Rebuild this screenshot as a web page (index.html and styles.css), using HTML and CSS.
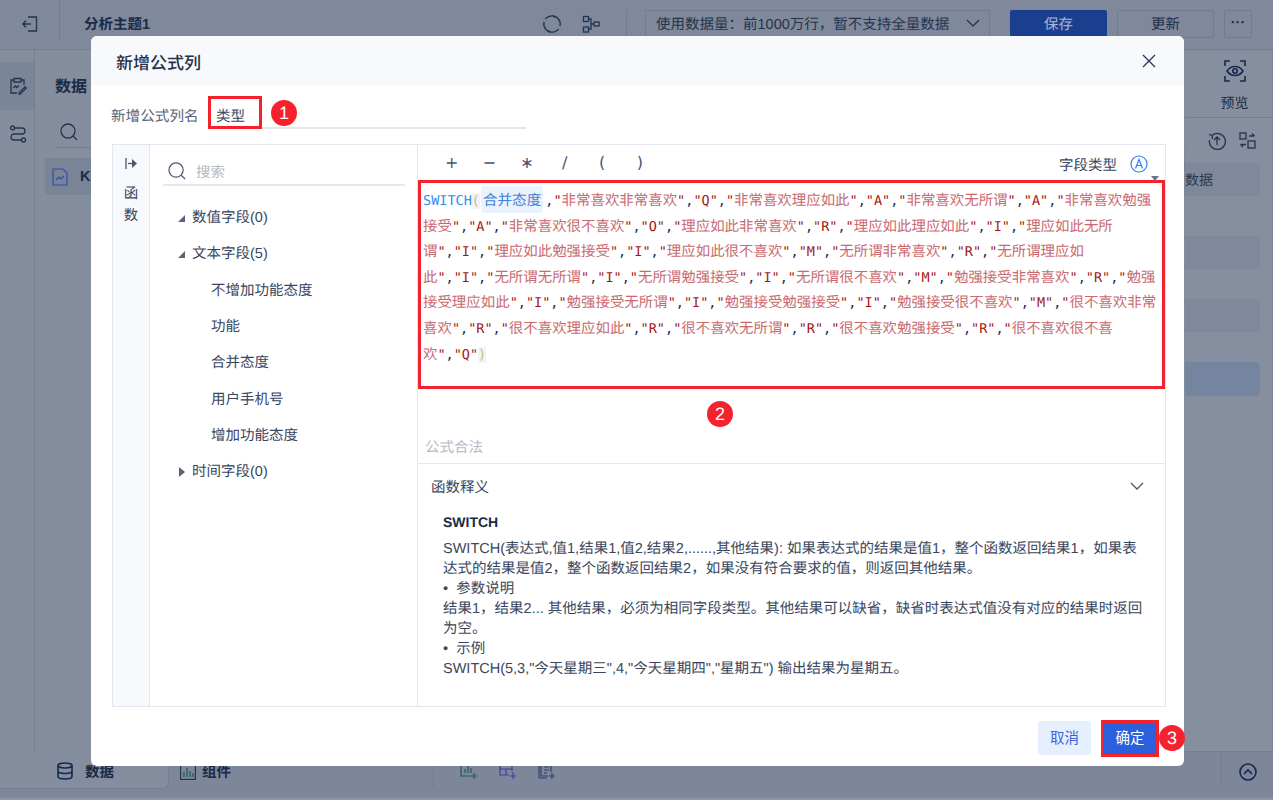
FILE: index.html
```html
<!DOCTYPE html>
<html lang="zh">
<head>
<meta charset="utf-8">
<title>新增公式列</title>
<link rel="stylesheet" href="styles.css">
</head>
<body>
<div class="app">
  <header class="topbar">
    <div class="exit">
      <svg width="18" height="18" viewBox="0 0 18 18" class="ic"><path d="M7 2h8.500v14H7M10 9H2M5 5.500 1.800 9 5 12.500"/></svg>
    </div>
    <div class="theme">分析主题1</div>
    <div class="tools">
      <svg width="20" height="20" viewBox="0 0 20 20" class="ic"><path d="M5 3.500A8 8 0 0 1 15 16.500M15 16.500A8 8 0 0 1 5 3.500" stroke-dasharray="20 3"/><path d="M11 1.500 13 3.500M8 18.500 6.500 16.500"/></svg>
      <svg width="18" height="18" viewBox="0 0 18 18" class="ic"><rect x="1.500" y="1.500" width="5" height="5"/><rect x="1.500" y="12" width="5" height="5"/><rect x="12" y="7" width="5" height="4"/><path d="M6.500 4H9v10H6.500M9 9h3"/></svg>
    </div>
    <div class="select"><span>使用数据量：前1000万行，暂不支持全量数据</span>
      <svg width="14" height="9" viewBox="0 0 14 9" class="ic"><path d="M1 1l6 6 6-6"/></svg>
    </div>
    <div class="btn save">保存</div>
    <div class="btn plain">更新</div>
    <div class="btn more">···</div>
  </header>
  <div class="body">
    <aside class="rail">
      <div class="rail-item active">
        <svg width="18" height="18" viewBox="0 0 18 18" class="ic"><path d="M12 3h3v5M5 3H2v13h6M5 1.500h7V5H5zM4.500 11l2-2 1.500 1.500 2-2M10 16l6-6 1.200 1.200-6 6H10z"/></svg>
      </div>
      <div class="rail-item">
        <svg width="18" height="18" viewBox="0 0 18 18" class="ic"><circle cx="3.500" cy="3" r="2"/><circle cx="14.500" cy="15" r="2"/><path d="M5.500 3H13a3 3 0 0 1 0 6H5a3 3 0 0 0 0 6h7.500"/></svg>
      </div>
    </aside>
    <section class="panel">
      <h2 class="panel-title">数据</h2>
      <div class="panel-search">
        <svg width="18" height="18" viewBox="0 0 18 18" class="ic"><circle cx="8" cy="8" r="7"/><path d="M13 13l4 4"/></svg>
      </div>
      <div class="panel-row">
        <svg width="16" height="18" viewBox="0 0 16 18" class="ic-blue"><path d="M1 1h10l4 4v12H1zM4 12l3-3 2 2 3-3"/></svg>
        <b>KA</b>
      </div>
    </section>
    <aside class="side">
      <div class="preview">
        <svg width="22" height="22" viewBox="0 0 22 22" class="ic-dark"><path d="M1 6V1h5M16 1h5v5M21 16v5h-5M6 21H1v-5M3 11c4-6 12-6 16 0-4 6-12 6-16 0z"/><circle cx="11" cy="11" r="2.200"/></svg>
        <span>预览</span>
      </div>
      <div class="side-tools">
        <svg width="18" height="18" viewBox="0 0 18 18" class="ic"><path d="M4 3.500A8 8 0 1 1 1.500 8M1 2.500 4 3.500 4.500 7M9 13V5M6 8l3-3 3 3"/></svg>
        <svg width="17" height="17" viewBox="0 0 17 17" class="ic"><rect x="1" y="1" width="6" height="6"/><rect x="9" y="9" width="7" height="7"/><path d="M10 4h5M13 1.500 15.500 4M7 12.500H1.500M4 15l-2.500-2.500"/></svg>
      </div>
      <div class="card">数据</div>
      <div class="card gap-1"></div>
      <div class="card gap-2"></div>
      <div class="card gap-2 blue"></div>
    </aside>
  </div>
  <footer class="bottombar">
    <div class="tab active">
      <svg width="16" height="18" viewBox="0 0 16 18" class="ic-dark"><ellipse cx="8" cy="3.500" rx="7" ry="2.500"/><path d="M1 3.500v11c0 3.300 14 3.300 14 0v-11M1 9c0 3.300 14 3.300 14 0"/></svg>
      <span>数据</span>
    </div>
    <div class="tab">
      <svg width="16" height="16" viewBox="0 0 16 16" class="ic"><rect x=".5" y=".5" width="15" height="15"/><path d="M4 13V8M7 13V4M10 13V7M13 13V9" class="teal"/></svg>
      <span>组件</span>
    </div>
    <div class="bar-tools">
      <svg width="18" height="18" viewBox="0 0 18 18" class="ic-teal"><path d="M1 1v13h10M5 11V7M8 11V3M11 11V6M14 11v6M11 14h6"/></svg>
      <svg width="18" height="18" viewBox="0 0 18 18" class="ic-purple"><path d="M1 2h12v7M1 2v11h9M1 7h12M7 7v6M14 10v7M11 14h6"/></svg>
      <svg width="18" height="18" viewBox="0 0 18 18" class="ic-navy"><path d="M3 1h10v9M3 1v13h7M1 3v13h8M6 5h5M6 8h5M6 11h3M14 11v6M11 14h6"/></svg>
    </div>
    <div class="collapse">
      <svg width="18" height="18" viewBox="0 0 18 18" class="ic-dark"><circle cx="9" cy="9" r="8"/><path d="M5 11l4-4 4 4"/></svg>
    </div>
  </footer>
</div>

<div class="modal">
  <div class="modal-head">
    <span class="modal-title">新增公式列</span>
    <svg width="14" height="14" viewBox="0 0 14 14" class="close"><path d="M1 1l12 12M13 1 1 13"/></svg>
  </div>
  <div class="name-row">
    <label class="name-label">新增公式列名</label>
    <div class="name-input"><span class="name-box">类型</span></div>
    <span class="badge b1">1</span>
  </div>
  <div class="workspace">
    <div class="ws-rail">
      <svg width="13" height="11" viewBox="0 0 13 11" class="rail-arrow"><path d="M1 0v11" class="line"/><path d="M3 5.500h4" class="line"/><path d="M7 1l5 4.500L7 10z" class="tri"/></svg>
      <span>函</span>
      <span>数</span>
    </div>
    <div class="ws-tree">
      <div class="tree-search">
        <svg width="18" height="18" viewBox="0 0 19 19" class="s-ic"><circle cx="8.500" cy="8.500" r="7.500"/><path d="M14 14l4 4"/></svg>
        <span>搜索</span>
      </div>
      <ul class="tree">
        <li class="group"><span class="tri-down"></span>数值字段(0)</li>
        <li class="group"><span class="tri-down"></span>文本字段(5)</li>
        <li class="leaf">不增加功能态度</li>
        <li class="leaf">功能</li>
        <li class="leaf">合并态度</li>
        <li class="leaf">用户手机号</li>
        <li class="leaf">增加功能态度</li>
        <li class="group"><span class="tri-right"></span>时间字段(0)</li>
      </ul>
    </div>
    <div class="ws-main">
      <div class="toolbar">
        <div class="ops"><span>+</span><span>−</span><span>∗</span><span>/</span><span>(</span><span>)</span></div>
        <div class="field-type">字段类型
          <svg width="18" height="18" viewBox="0 0 18 18" class="type-ic"><circle cx="9" cy="9" r="8"/><path d="M5.500 13.500 9 4.500l3.500 9M6.500 10.500h5"/></svg>
          <span class="mini-tri"></span>
        </div>
      </div>
      <div class="editor"><span class="kw">SWITCH</span><span class="paren">(</span><span class="chip">合并态度</span><span class="c">,</span>"<span class="z">非常喜欢非常喜欢</span>"<span class="c">,</span>"Q"<span class="c">,</span>"<span class="z">非常喜欢理应如此</span>"<span class="c">,</span>"A"<span class="c">,</span>"<span class="z">非常喜欢无所谓</span>"<span class="c">,</span>"A"<span class="c">,</span>"<span class="z">非常喜欢勉强接受</span>"<span class="c">,</span>"A"<span class="c">,</span>"<span class="z">非常喜欢很不喜欢</span>"<span class="c">,</span>"O"<span class="c">,</span>"<span class="z">理应如此非常喜欢</span>"<span class="c">,</span>"R"<span class="c">,</span>"<span class="z">理应如此理应如此</span>"<span class="c">,</span>"I"<span class="c">,</span>"<span class="z">理应如此无所谓</span>"<span class="c">,</span>"I"<span class="c">,</span>"<span class="z">理应如此勉强接受</span>"<span class="c">,</span>"I"<span class="c">,</span>"<span class="z">理应如此很不喜欢</span>"<span class="c">,</span>"M"<span class="c">,</span>"<span class="z">无所谓非常喜欢</span>"<span class="c">,</span>"R"<span class="c">,</span>"<span class="z">无所谓理应如此</span>"<span class="c">,</span>"I"<span class="c">,</span>"<span class="z">无所谓无所谓</span>"<span class="c">,</span>"I"<span class="c">,</span>"<span class="z">无所谓勉强接受</span>"<span class="c">,</span>"I"<span class="c">,</span>"<span class="z">无所谓很不喜欢</span>"<span class="c">,</span>"M"<span class="c">,</span>"<span class="z">勉强接受非常喜欢</span>"<span class="c">,</span>"R"<span class="c">,</span>"<span class="z">勉强接受理应如此</span>"<span class="c">,</span>"I"<span class="c">,</span>"<span class="z">勉强接受无所谓</span>"<span class="c">,</span>"I"<span class="c">,</span>"<span class="z">勉强接受勉强接受</span>"<span class="c">,</span>"I"<span class="c">,</span>"<span class="z">勉强接受很不喜欢</span>"<span class="c">,</span>"M"<span class="c">,</span>"<span class="z">很不喜欢非常喜欢</span>"<span class="c">,</span>"R"<span class="c">,</span>"<span class="z">很不喜欢理应如此</span>"<span class="c">,</span>"R"<span class="c">,</span>"<span class="z">很不喜欢无所谓</span>"<span class="c">,</span>"R"<span class="c">,</span>"<span class="z">很不喜欢勉强接受</span>"<span class="c">,</span>"R"<span class="c">,</span>"<span class="z">很不喜欢很不喜欢</span>"<span class="c">,</span>"Q"<span class="paren">)</span></div>
      <div class="status"><span class="status-text">公式合法</span><span class="badge b2">2</span></div>
      <div class="help">
        <div class="help-head"><span>函数释义</span>
          <svg width="14" height="9" viewBox="0 0 14 9" class="chev"><path d="M1 1l6 6 6-6"/></svg>
        </div>
        <div class="help-body">
          <div class="help-name">SWITCH</div>
          <p>SWITCH(表达式,值1,结果1,值2,结果2,......,其他结果): 如果表达式的结果是值1，整个函数返回结果1，如果表达式的结果是值2，整个函数返回结果2，如果没有符合要求的值，则返回其他结果。</p>
          <p>•&nbsp; 参数说明</p>
          <p>结果1，结果2... 其他结果，必须为相同字段类型。其他结果可以缺省，缺省时表达式值没有对应的结果时返回为空。</p>
          <p>•&nbsp; 示例</p>
          <p>SWITCH(5,3,"今天星期三",4,"今天星期四","星期五") 输出结果为星期五。</p>
        </div>
      </div>
    </div>
  </div>
  <div class="modal-foot">
    <button class="m-btn cancel">取消</button>
    <button class="m-btn ok">确定</button>
    <span class="badge b3">3</span>
  </div>
</div>
</body>
</html>
```
FILE: styles.css
```css
* { box-sizing: border-box; }
html, body { margin: 0; padding: 0; height: 800px; overflow: hidden; }
body { font-family: "Liberation Sans", "Noto Sans CJK SC", sans-serif; font-size: 14.5px; color: #1c2a45; background: #7f899b; text-rendering: geometricPrecision; }
ul { list-style: none; margin: 0; padding: 0; }
svg { display: block; flex: none; fill: none; }
.ic path, .ic rect, .ic circle { stroke: #24344f; stroke-width: 1.3; }
.ic-dark path, .ic-dark circle, .ic-dark ellipse { stroke: #14294f; stroke-width: 1.6; }
.ic-blue path { stroke: #2c4fa8; stroke-width: 1.2; }
.ic-teal path { stroke: #1f5a66; stroke-width: 1.2; }
.ic-purple path { stroke: #3f3f99; stroke-width: 1.2; }
.ic-navy path { stroke: #33406f; stroke-width: 1.2; }

.app { height: 800px; display: flex; flex-direction: column; }
.topbar { height: 50px; flex: none; display: flex; align-items: flex-start; padding-top: 10px; background: #7f899b; border-bottom: 1px solid #767f91; }
.exit { width: 60px; height: 39px; margin-top: -10px; padding: 15px 0 0 21px; border-right: 1px solid #727c8e; }
.theme { margin: 5px 0 0 24px; width: 458px; font-weight: bold; line-height: 21px; color: #1a2a44; }
.tools { width: 85px; height: 28px; display: flex; align-items: center; gap: 20px; border-right: 1px solid #727c8e; }
.select { margin-left: 18px; width: 345px; height: 28px; padding: 0 9px 2px 10px; display: flex; align-items: center; justify-content: space-between; border: 1px solid #727c8e; color: #25344d; }
.btn { height: 28px; padding-bottom: 2px; display: flex; align-items: center; justify-content: center; border-radius: 2px; }
.save { margin-left: 20px; width: 97px; background: #1b3f8f; color: #a9b6cf; }
.plain { margin-left: 10px; width: 97px; border: 1px solid #727c8e; color: #1f2e48; }
.more { margin-left: 10px; width: 28px; border: 1px solid #727c8e; color: #1f2e48; font-weight: bold; }

.body { flex: 1; display: flex; min-height: 0; }
.rail { width: 35px; flex: none; padding-top: 12px; background: #858e9f; border-right: 1px solid #757f90; }
.rail-item { height: 48px; padding: 15px 0 0 9px; }
.rail-item.active { background: #7b8598; }
.panel { flex: 1; background: #858e9f; padding: 26px 0 0 10px; }
.panel-title { margin: 0 0 0 10px; font-size: 16px; line-height: 24px; color: #1c2a45; }
.panel-search { margin: 21px 0 0 10px; height: 27px; padding: 2px 0 0 5px; border-bottom: 1px solid #727c8e; }
.panel-row { margin-top: 10px; height: 37px; display: flex; align-items: center; gap: 12px; padding-left: 7px; background: #7a8497; }
.side { width: 88px; flex: none; background: #868f9f; border-right: 1px solid #7b8495; border-bottom: 1px solid #767f91; padding-right: 12px; }
.preview { height: 68px; margin-right: -12px; padding: 10px 0 0 12px; border-bottom: 1px solid #757f90; display: flex; flex-direction: column; align-items: center; }
.preview span { margin-top: 11px; color: #1c2a45; font-size: 14px; line-height: 20px; }
.side-tools { height: 45px; display: flex; align-items: center; justify-content: flex-end; gap: 13px; padding-right: 4px; }
.card { height: 33px; background: #7f899b; border-radius: 0 5px 5px 0; color: #2a3850; font-size: 14px; line-height: 35px; }
.gap-1 { margin-top: 40px; }
.gap-2 { margin-top: 30px; }
.blue { height: 34px; background: #76859f; }

.bottombar { height: 48px; flex: none; display: flex; align-items: flex-start; background: #7d8799; border-bottom: 2px solid #8f97a6; }
.tab { display: flex; align-items: center; height: 37px; font-weight: bold; color: #1c2a45; }
.tab.active { width: 169px; gap: 12px; padding: 2px 0 0 57px; background: #858e9f; border-radius: 0 0 6px 0; border: 1px solid #757f90; border-width: 0 1px 1px 0; }
.tab:not(.active) { gap: 6px; padding: 2px 0 0 11px; width: 264px; }
.teal { stroke: #1f5a66 !important; }
.bar-tools { height: 36px; display: flex; gap: 21px; padding: 10px 0 0 26px; width: 789px; border-left: 1px solid #737d8f; }
.collapse { padding: 11px 0 0 17px; height: 36px; margin-left: -1px; border-left: 1px solid #737d8f; }

/* dialog */
.modal { position: absolute; left: 91px; top: 36px; width: 1093px; height: 730px; background: #fff; border-radius: 6px; display: flex; flex-direction: column; color: #3a465c; }
.modal-head { height: 50px; flex: none; display: flex; align-items: center; justify-content: space-between; padding: 0 28px 0 25px; background: #f8f9fd; border-radius: 6px 6px 0 0; }
.modal-title { font-size: 17px; font-weight: 500; color: #25304a; }
.close path { stroke: #2a3650; stroke-width: 1.3; }
.name-row { height: 58px; flex: none; display: flex; padding: 10px 0 0 20px; position: relative; }
.name-label { width: 97px; padding-top: 11px; line-height: 20px; color: #5a6479; font-size: 14.6px; }
.name-input { width: 318px; height: 33px; border-bottom: 2px solid #e5e7ec; }
.name-box { display: block; width: 54px; height: 33px; border: 3px solid #f5222d; padding: 8px 0 0 5px; line-height: 20px; color: #3a465c; background: #fff; }

.badge { position: absolute; width: 26px; height: 26px; border-radius: 50%; background: #f5222d; color: #fff; font-size: 18px; font-weight: 500; line-height: 26px; text-align: center; }
.b1 { left: 180px; top: 14px; }
.b2 { left: 289px; top: 12px; }
.b3 { right: -1px; top: 18px; }

.workspace { flex: none; width: 1054px; height: 563px; margin-left: 21px; display: flex; border: 1.500px solid #e3e6ec; }
.ws-rail { width: 37px; flex: none; background: #f8f9fd; border-right: 1.500px solid #e3e6ec; display: flex; flex-direction: column; align-items: center; color: #3a465c; line-height: 22px; padding-top: 13px; }
.rail-arrow { margin: 0 0 14px 0; }
.line { stroke: #4a5670; stroke-width: 1.3; }
.tri { fill: #4a5670; }
.ws-tree { width: 268px; flex: none; border-right: 1.500px solid #e3e6ec; padding: 0 12px; }
.tree-search { height: 41px; display: flex; align-items: center; gap: 10px; padding: 13px 0 0 5px; margin: 0 0 0 1px; border-bottom: 2px solid #e6e8ed; color: #b5bac6; }
.s-ic circle, .s-ic path { stroke: #4e5a72; stroke-width: 1.3; }
.tree { margin-top: 14px; }
.tree li { height: 36.350px; line-height: 36px; color: #3a465c; white-space: nowrap; }
.group { position: relative; padding-left: 30px; }
.leaf { padding-left: 49px; }
.tri-down { position: absolute; left: 16px; top: 15px; width: 0; height: 0; border-left: 7px solid transparent; border-bottom: 7px solid #5a6479; }
.tri-right { position: absolute; left: 17px; top: 13px; width: 0; height: 0; border-left: 6px solid #5a6479; border-top: 5px solid transparent; border-bottom: 5px solid transparent; }

.ws-main { flex: 1; min-width: 0; display: flex; flex-direction: column; position: relative; }
.toolbar { height: 35px; flex: none; display: flex; align-items: center; justify-content: space-between; }
.ops { display: flex; padding-left: 15px; color: #4a5670; font-size: 16px; font-family: "DejaVu Sans", sans-serif; }
.ops span { width: 37.600px; text-align: center; }
.field-type { display: flex; align-items: center; gap: 13px; margin: 3px 17px 0 0; color: #3a465c; position: relative; }
.type-ic circle, .type-ic path { stroke: #2f80ed; stroke-width: 1.200; }
.mini-tri { position: absolute; right: -11px; bottom: -6px; width: 0; height: 0; border-left: 4px solid transparent; border-right: 4px solid transparent; border-top: 5px solid #6a7488; }

.editor { height: 209px; flex: none; border: 3px solid #f5222d; padding: 6px 3px 0 2px; font-family: "DejaVu Sans Mono", "Noto Sans CJK SC", monospace; font-size: 13.500px; line-height: 25.600px; color: #a31515; background: #fff; }
.kw { color: #2f8bf0; font-weight: 500; }
.paren { color: #dcb767; background: #eef4fb; }
.chip { margin: 0 2px 0 1px; padding: 3px 2px; background: #e9f2fd; border-radius: 3px; color: #3f83d9; font-family: "Noto Sans CJK SC", sans-serif; font-size: 14.600px; line-height: 1; }
.c { color: #1c2a55; }
.z { font-family: "Noto Sans CJK SC", sans-serif; font-size: 14.450px; line-height: 1; color: #c96a70; }
.status { height: 75px; flex: none; position: relative; padding: 49px 0 0 7px; border-bottom: 1.500px solid #e6e8ed; }
.status-text { color: #b5bac6; line-height: 20px; }
.help { flex: 1; min-height: 0; }
.help-head { height: 44px; display: flex; align-items: center; justify-content: space-between; padding: 0 21px 0 13px; color: #3a465c; }
.chev path { stroke: #4a5670; stroke-width: 1.3; }
.help-body { padding: 4px 22px 0 25px; }
.help-name { font-weight: bold; font-size: 14px; line-height: 20px; color: #1c2a45; margin-bottom: 7px; }
.help-body p { margin: 0; line-height: 20px; color: #3a465c; }

.modal-foot { flex: 1; display: flex; justify-content: flex-end; align-items: flex-start; gap: 10px; padding: 13px 25px 0 0; position: relative; }
.m-btn { font: inherit; border: 0; padding: 0 0 4px; }
.cancel { margin-top: 1px; width: 53px; height: 34px; border-radius: 3px; background: #e6effd; color: #3b68d8; }
.ok { width: 58px; height: 37px; background: #2c5fdb; color: #fff; border: 3px solid #f5222d; }
```
